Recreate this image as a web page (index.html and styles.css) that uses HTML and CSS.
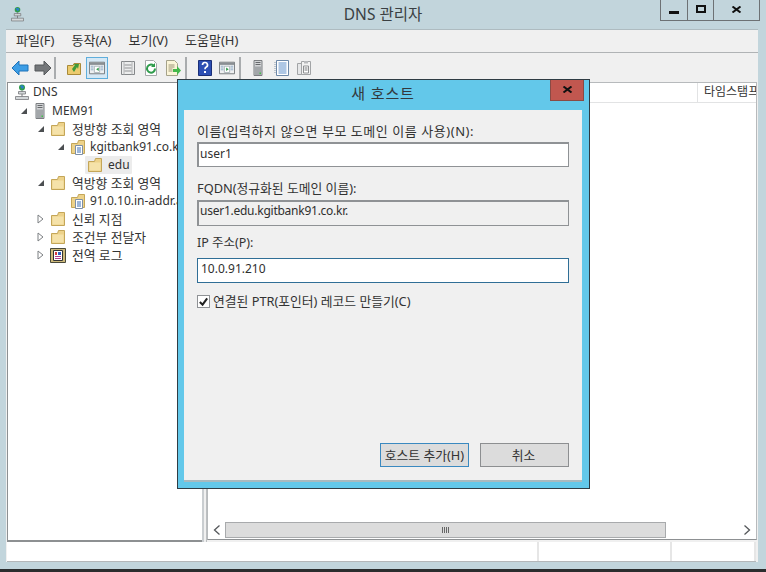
FILE: index.html
```html
<!DOCTYPE html>
<html lang="ko">
<head>
<meta charset="utf-8">
<title>DNS 관리자</title>
<link rel="stylesheet" href="styles.css">
</head>
<body>
<svg class="defs" width="0" height="0">
  <defs>
    <symbol id="dns" viewBox="0 0 14 16">
      <circle cx="7" cy="3.500" r="3" fill="#2f9c4c"/>
      <path d="M5 1.500h3l1 2-2 1.500z" fill="#2a7fd0"/>
      <path d="M6.500 6.500h1v3h-1z" fill="#666"/>
      <path d="M3.500 7.500h7v2.500h-7z" fill="#d4d8da" stroke="#77797c" stroke-width=".8"/>
      <path d="M.5 12.500h13v3H.5z" fill="#d4d8da" stroke="#77797c" stroke-width=".8"/>
      <path d="M7 10v2.500" stroke="#77797c"/>
    </symbol>
    <symbol id="server" viewBox="0 0 10 16">
      <path d="M1 .5h8v15H1z" fill="#d2d4d6" stroke="#7b7e81"/>
      <path d="M2.500 2.500h5M2.500 4.500h5" stroke="#66696c"/>
      <path d="M1.500 6.500h7v8.500h-7z" fill="#a3a7aa"/>
      <path d="M6.500 12.500h1.500v1.500H6.500z" fill="#42c14a"/>
    </symbol>
    <symbol id="folder" viewBox="0 0 16 16">
      <path d="M1.500 4.500V14.500h13V1.500H8.500L7.500 4.500z" fill="#edd28a" stroke="#c4a658"/>
      <path d="M2.500 5.500h11v8h-11z" fill="#f5e2a9"/>
    </symbol>
    <symbol id="zone" viewBox="0 0 16 16">
      <path d="M1.500 4.500V14.500h13V1.500H8.500L7.500 4.500z" fill="#edd28a" stroke="#c4a658"/>
      <path d="M5.500 6.500h7v9h-7z" fill="#fff" stroke="#7d8fa6"/>
      <path d="M7 9h4M7 11h4M7 13h4" stroke="#3b6fb5"/>
    </symbol>
    <symbol id="log" viewBox="0 0 16 16">
      <path d="M.5 1.500h15v14H.5z" fill="#cdb97a" stroke="#4a4a3a"/>
      <path d="M3.500 3.500h9v10h-9z" fill="#fff" stroke="#333"/>
      <path d="M5 5h2v3H5z" fill="#d93a3a"/>
      <path d="M8 5h3v3H8z" fill="#2f62c4"/>
      <path d="M5 9h6v1H5zM5 11h6v1H5z" fill="#b03a8c"/>
    </symbol>
    <symbol id="open" viewBox="0 0 8 10">
      <path d="M1 1l5 4-5 4z" fill="#fff" stroke="#7d8083"/>
    </symbol>
    <symbol id="expanded" viewBox="0 0 8 8">
      <path d="M7 1v6H1z" fill="#4c4f52"/>
    </symbol>
    <symbol id="close-x" viewBox="0 0 11 7">
      <path d="M1.500 .5l8 6M9.500 .5l-8 6" fill="none" stroke="#111" stroke-width="2"/>
    </symbol>
  </defs>
</svg>

<div class="app">
  <header class="titlebar">
    <svg class="title-icon"><use href="#dns"/></svg>
    <span class="title-text">DNS 관리자</span>
    <div class="window-buttons">
      <span class="wbtn wbtn-min"><i class="glyph-min"></i></span>
      <span class="wbtn wbtn-max"><i class="glyph-max"></i></span>
      <span class="wbtn wbtn-close"><svg class="close-glyph"><use href="#close-x"/></svg></span>
    </div>
  </header>

  <div class="client">
    <nav class="menubar">
      <span class="menu-item">파일(F)</span>
      <span class="menu-item">동작(A)</span>
      <span class="menu-item">보기(V)</span>
      <span class="menu-item">도움말(H)</span>
    </nav>

    <div class="toolbar">
      <svg class="tool tool-arrow" viewBox="0 0 18 16"><path d="M1 8l7-7v4h9v6H8v4z" fill="#3d9ee6" stroke="#1f72b8"/></svg>
      <svg class="tool tool-arrow" viewBox="0 0 18 16"><path d="M17 8l-7-7v4H1v6h9v4z" fill="#74777a" stroke="#55585b"/></svg>
      <span class="tool-sep"></span>
      <svg class="tool tool-before-active" viewBox="0 0 16 16"><path d="M1.500 5.500v9h13v-11H8l-1 2z" fill="#eccb6e" stroke="#a98a38"/><path d="M6 9l3-4-2-1h6l-1 5-1-2-3 5z" fill="#3f9a3a"/></svg>
      <span class="tool-active">
        <svg class="tool" viewBox="0 0 18 16"><path d="M.5 1.500h17v13H.5z" fill="#eef0f1" stroke="#6c7174"/><path d="M1 2h16v2.500H1z" fill="#8a8f93"/><path d="M6 6h6v7H6z" fill="#fff" stroke="#a5b0b5"/><path d="M11 7.500v4L8 9.500z" fill="#2f9c4c"/><path d="M2 6h3M2 8h3M2 10h3M13 6h3M13 8h3M13 10h3" stroke="#8aa7c4"/></svg>
      </span>
      <svg class="tool tool-gap" viewBox="0 0 16 16"><path d="M1.500 1.500h13v13h-13z" fill="#eceded" stroke="#85888a"/><path d="M4 1.500v13M12 1.500v13" stroke="#b2b4b6"/><path d="M4.500 5h7M4.500 8h7M4.500 11h7" stroke="#919395"/></svg>
      <svg class="tool" viewBox="0 0 16 16"><path d="M2.500 .5h8l3 3v12h-11z" fill="#fff" stroke="#a5a8aa"/><path d="M12 8.500a4 4 0 1 1-1.500-3" fill="none" stroke="#2f9c4c" stroke-width="2"/><path d="M12 3v4H8z" fill="#2f9c4c"/></svg>
      <svg class="tool tool-end" viewBox="0 0 16 16"><path d="M1.500 .5h8l3 3v12h-11z" fill="#fbf5d8" stroke="#a5a28a"/><path d="M3.500 5h6M3.500 7h6M3.500 9h4M3.500 11h4" stroke="#9b9476"/><path d="M8 9h4V6l4 4.500-4 4.500v-3H8z" fill="#45b84a"/></svg>
      <span class="tool-sep"></span>
      <svg class="tool" viewBox="0 0 16 16"><path d="M1.500 .5h13v15h-13z" fill="#2d4fb3" stroke="#1b2f78"/><path d="M5.500 5a2.500 2.500 0 1 1 3.500 2.300c-.8.400-1 .8-1 1.900" fill="none" stroke="#fff" stroke-width="1.700"/><path d="M7 11h2v2H7z" fill="#fff"/></svg>
      <svg class="tool tool-end" viewBox="0 0 18 16"><path d="M.5 1.500h17v13H.5z" fill="#eef0f1" stroke="#6c7174"/><path d="M1 2h16v2.500H1z" fill="#8a8f93"/><path d="M6 6h6v7H6z" fill="#fff" stroke="#a5b0b5"/><path d="M8 7.500v4l3-2z" fill="#2f9c4c"/><path d="M2 6h3M2 8h3M2 10h3M13 6h3M13 8h3M13 10h3" stroke="#8aa7c4"/></svg>
      <span class="tool-sep"></span>
      <svg class="tool tool-server"><use href="#server"/></svg>
      <svg class="tool" viewBox="0 0 16 16"><path d="M2.500 .5h12v15h-12z" fill="#fff" stroke="#6d88a8"/><path d="M4.500 3h8M4.500 5h8M4.500 7h8M4.500 9h8M4.500 11h8M4.500 13h8" stroke="#5f8fc9"/><path d="M1 2v12" stroke="#8a9aab" stroke-dasharray="1 1"/></svg>
      <svg class="tool" viewBox="0 0 16 16"><path d="M1.500 3.500h8v11h-8z" fill="#e6e7e8" stroke="#a2a4a6"/><path d="M5.500 1.500h9v13h-9z" fill="#f3f3f3" stroke="#a2a4a6"/><path d="M8 1h4v2.500H8z" fill="#b8babc"/><path d="M7.500 6h5v7h-5z" fill="#fff" stroke="#8e9092"/><path d="M8.500 8h3M8.500 10h3" stroke="#77797b"/></svg>
    </div>

    <div class="panes">
      <aside class="tree">
        <div class="node"><svg class="ico"><use href="#dns"/></svg><span>DNS</span></div>
        <div class="node lvl1"><svg class="tw"><use href="#expanded"/></svg><svg class="ico"><use href="#server"/></svg><span>MEM91</span></div>
        <div class="node lvl2"><svg class="tw"><use href="#expanded"/></svg><svg class="ico"><use href="#folder"/></svg><span>정방향 조회 영역</span></div>
        <div class="node lvl3"><svg class="tw"><use href="#expanded"/></svg><svg class="ico"><use href="#zone"/></svg><span>kgitbank91.co.kr</span></div>
        <div class="node lvl4"><span class="selected"><svg class="ico"><use href="#folder"/></svg><span>edu</span></span></div>
        <div class="node lvl2"><svg class="tw"><use href="#expanded"/></svg><svg class="ico"><use href="#folder"/></svg><span>역방향 조회 영역</span></div>
        <div class="node lvl3"><span class="tw"></span><svg class="ico"><use href="#zone"/></svg><span>91.0.10.in-addr.arpa</span></div>
        <div class="node lvl2"><svg class="tw tw-open"><use href="#open"/></svg><svg class="ico"><use href="#folder"/></svg><span>신뢰 지점</span></div>
        <div class="node lvl2"><svg class="tw tw-open"><use href="#open"/></svg><svg class="ico"><use href="#folder"/></svg><span>조건부 전달자</span></div>
        <div class="node lvl2"><svg class="tw tw-open"><use href="#open"/></svg><svg class="ico"><use href="#log"/></svg><span>전역 로그</span></div>
      </aside>
      <div class="splitter"></div>
      <section class="detail">
        <div class="list-head"><span class="col-spacer"></span><span class="col-stamp">타임스탬프</span></div>
        <div class="list-body"></div>
        <div class="hscroll">
          <span class="sb-arrow">
            <svg class="sb-glyph" viewBox="0 0 8 12"><path d="M6.500 1.500L1.500 6l5 4.500" fill="none" stroke="#55585b" stroke-width="1.300"/></svg>
          </span>
          <span class="sb-thumb"><i class="grip"></i></span>
          <span class="sb-track"></span>
          <span class="sb-arrow">
            <svg class="sb-glyph" viewBox="0 0 8 12"><path d="M1.500 1.500L6.500 6l-5 4.500" fill="none" stroke="#55585b" stroke-width="1.300"/></svg>
          </span>
        </div>
      </section>
    </div>

    <footer class="statusbar">
      <span class="st st-main"></span>
      <span class="st st-mid"></span>
      <span class="st st-end"></span>
    </footer>
  </div>
  <div class="frame-bottom"></div>
  <div class="taskbar-edge"></div>

  <div class="dialog">
    <div class="dialog-title">
      <span class="dialog-caption">새 호스트</span>
      <span class="dialog-close"><svg class="close-glyph"><use href="#close-x"/></svg></span>
    </div>
    <form class="dialog-body">
      <label class="field-label label-name">이름(입력하지 않으면 부모 도메인 이름 사용)(N):</label>
      <div class="input">user1</div>
      <label class="field-label label-fqdn">FQDN(정규화된 도메인 이름):</label>
      <div class="input input-readonly">user1.edu.kgitbank91.co.kr.</div>
      <label class="field-label label-ip">IP 주소(P):</label>
      <div class="input input-focus">10.0.91.210</div>
      <div class="check-row">
        <span class="checkbox"><svg class="check-mark" viewBox="0 0 12 12"><path d="M2 6.500l3 3 5-7" fill="none" stroke="#222" stroke-width="2.200"/></svg></span>
        <span>연결된 PTR(포인터) 레코드 만들기(C)</span>
      </div>
      <div class="dialog-actions">
        <span class="btn btn-default">호스트 추가(H)</span>
        <span class="btn btn-cancel">취소</span>
      </div>
    </form>
  </div>
</div>
</body>
</html>
```

FILE: styles.css
```css
* { box-sizing: border-box; }
html, body { margin: 0; padding: 0; }
body {
  width: 766px;
  height: 572px;
  overflow: hidden;
  font-family: "Noto Sans", "Noto Sans CJK KR", sans-serif;
  font-size: 12px;
  color: #333;
  background: #c2d5dc;
}
.defs { position: absolute; }
.app {
  position: relative;
  width: 766px;
  height: 572px;
  display: flex;
  flex-direction: column;
}

/* Title bar */
.titlebar {
  height: 29px;
  flex: none;
  display: grid;
  grid-template-columns: 1fr auto 1fr;
  align-items: start;
}
.title-icon { width: 13px; height: 16px; margin: 6px 0 0 11px; }
.title-text {
  font-size: 15.500px;
  line-height: 20px;
  margin-top: 4px;
  color: #3a3f42;
}
.window-buttons {
  justify-self: end;
  display: flex;
  margin-right: 6px;
  height: 21px;
  border: 1px solid #6d7174;
  border-top: 0;
}
.wbtn {
  display: flex;
  align-items: center;
  justify-content: center;
  height: 20px;
  background: #c2d5dc;
  color: #111;
}
.wbtn-min { width: 27px; border-right: 1px solid #6d7174; }
.wbtn-max { width: 26px; border-right: 1px solid #6d7174; }
.wbtn-close { width: 45px; }
.close-glyph { width: 11px; height: 7px; margin-bottom: 2px; }
.glyph-min { width: 10px; height: 3px; background: #111; margin-top: 5px; }
.glyph-max { width: 10px; height: 8px; border: 2px solid #111; margin-bottom: 2px; }

/* Client */
.client {
  margin: 0 8px 0 6px;
  height: 533px;
  flex: none;
  display: flex;
  flex-direction: column;
  background: #f0f0f0;
  border-top: 1px solid #aebbc0;
}
.menubar {
  height: 23px;
  flex: none;
  display: flex;
  align-items: center;
  gap: 17px;
  padding: 0 0 4px 10px;
  border-bottom: 1px solid #b0b3b5;
  font-size: 13px;
}
.toolbar {
  height: 29px;
  flex: none;
  display: flex;
  align-items: center;
  padding-left: 5px;
}
.tool { width: 16px; height: 16px; margin-right: 6px; flex: none; }
.tool-arrow { width: 18px; margin-right: 5px; }
.tool-arrow + .tool-arrow { margin-right: 2px; }
.tool-sep {
  width: 2px;
  height: 22px;
  background: #a9acae;
  margin-right: 10px;
  flex: none;
}
.tool-before-active { margin-right: 4px; }
.tool-active {
  display: flex;
  align-items: center;
  justify-content: center;
  width: 22px;
  height: 22px;
  background: #d5e8f5;
  border: 1px solid #5faedc;
  margin-right: 12px;
}
.tool-active .tool { margin: 0; }
.tool-gap { margin-right: 7px; }
.tool-end { margin-right: 4px; }
.tool-end + .tool-sep + .tool-server { margin-left: 2px; }
.tool-server { width: 10px; margin-right: 11px; }

/* Panes */
.panes {
  flex: 1;
  min-height: 0;
  display: flex;
}
.tree {
  width: 195px;
  flex: none;
  background: #fff;
  border: 1px solid #8d9092;
  border-right: 0;
  border-bottom-width: 2px;
  margin-left: 1px;
  overflow: hidden;
}
.node {
  height: 18px;
  display: flex;
  align-items: center;
  white-space: nowrap;
  padding-left: 7px;
}
.node > span:last-child:not(.selected), .selected > span { margin-bottom: 2px; }
.ico { width: 14px; height: 16px; margin-right: 4px; flex: none; }
.tw { width: 8px; height: 8px; margin-right: 5px; flex: none; }
.tw-open { height: 10px; }
.lvl1 { padding-left: 12px; margin-top: 1px; }
.lvl1 .ico { width: 10px; margin: 0 7px 0 2px; }
.lvl2 { padding-left: 29px; font-size: 12.800px; }
.lvl2 > span:last-child { margin-bottom: 4px; }
.lvl2 .ico { width: 16px; margin-right: 6px; }
.lvl3 { padding-left: 49px; }
.lvl3 .ico { width: 16px; margin-right: 4px; }
.lvl4 { padding-left: 77px; }
.lvl4 .ico { width: 16px; margin-right: 5px; }
.selected {
  display: flex;
  align-items: center;
  height: 18px;
  width: 47px;
  padding-left: 2px;
  background: #ececec;
  border-radius: 1px;
}
.splitter {
  width: 5px;
  flex: none;
  background: #f0f0f0;
  border-left: 2px solid #c9cdd0;
  border-right: 1px solid #bcbfc1;
}
.detail {
  flex: 1;
  min-width: 0;
  display: flex;
  flex-direction: column;
  background: #fff;
  border: 1px solid #b7babc;
  border-bottom: 1px solid #8d9092;
  margin: 0 1px 2px 0;
}
.list-head {
  height: 20px;
  flex: none;
  display: flex;
  border-bottom: 1px solid #e2e3e4;
  overflow: hidden;
}
.col-spacer { width: 490px; flex: none; border-right: 1px solid #e2e3e4; }
.col-stamp { padding-left: 6px; white-space: nowrap; line-height: 18px; font-size: 12px; }
.list-body { flex: 1; }
.hscroll {
  height: 18px;
  flex: none;
  display: flex;
  align-items: stretch;
  background: #fff;
  padding: 1px;
}
.sb-arrow {
  width: 16px;
  flex: none;
  display: flex;
  align-items: center;
  justify-content: center;
  background: #fff;
}
.sb-glyph { width: 8px; height: 12px; }
.sb-thumb {
  flex: none;
  width: 441px;
  display: flex;
  align-items: center;
  justify-content: center;
  background: #dcdcdc;
  border: 1px solid #a8aaac;
}
.grip {
  width: 8px;
  height: 6px;
  background: repeating-linear-gradient(90deg, #666 0 1px, transparent 1px 2px);
}
.sb-track { flex: 1; background: #fff; }

/* Status */
.statusbar {
  height: 20px;
  flex: none;
  display: flex;
  background: #fff;
  margin: 0 2px 0 1px;
  border-bottom: 1px solid #b4b7b9;
}
.st { border-right: 2px solid #e6e6e6; }
.st-main { width: 532px; }
.st-mid { width: 133px; }
.st-end { flex: 1; }
.frame-bottom { flex: 1; }
.taskbar-edge { height: 3px; flex: none; background: #2b2d2e; }

/* Dialog */
.dialog {
  position: absolute;
  left: 177px;
  top: 79px;
  width: 413px;
  height: 410px;
  display: flex;
  flex-direction: column;
  background: #63c8ea;
  border: 1px solid #2f3c44;
  padding: 0 7px 6px 6px;
}
.dialog-title {
  height: 30px;
  flex: none;
  position: relative;
  display: flex;
  align-items: center;
  justify-content: center;
  padding-bottom: 5px;
}
.dialog-caption { font-size: 15px; letter-spacing: .9px; color: #33393d; }
.dialog-close {
  position: absolute;
  top: 0;
  right: -2px;
  width: 34px;
  height: 21px;
  display: flex;
  align-items: center;
  justify-content: center;
  background: #c1574f;
  border: 1px solid #8a4a44;
  border-top: 0;
}
.dialog-body {
  flex: 1;
  min-height: 0;
  display: flex;
  flex-direction: column;
  background: #f0f0f0;
  border-bottom: 2px solid #a9b9bf;
  padding: 12px 13px 13px;
}
.field-label { line-height: 18px; height: 18px; }
.label-name { font-size: 13px; letter-spacing: .55px; }
.label-fqdn { margin-top: 12px; font-size: 12.800px; }
.label-ip { margin-top: 8px; font-size: 12.500px; }
.input {
  height: 25px;
  margin-top: 2px;
  border: 1px solid #8f9295;
  border-left-width: 2px;
  border-top-width: 2px;
  background: #fff;
  padding-left: 1px;
  line-height: 19px;
  color: #2f2f2f;
}
.input-readonly { height: 26px; margin-top: 3px; background: #f0f0f0; letter-spacing: -.25px; line-height: 18px; }
.input-focus { border-color: #2f6e96; border-left-width: 1px; border-top-width: 1px; padding-left: 3px; margin-top: 6px; }
.check-row {
  display: flex;
  align-items: center;
  gap: 3px;
  margin-top: 9px;
  height: 16px;
  font-size: 12.800px;
}
.checkbox {
  width: 13px;
  height: 13px;
  background: #fff;
  border: 1px solid #8f9295;
  display: flex;
  margin-top: 2px;
}
.check-mark { width: 11px; height: 11px; }
.dialog-actions {
  margin-top: auto;
  display: flex;
  justify-content: flex-end;
  gap: 11px;
}
.btn {
  width: 89px;
  height: 24px;
  display: flex;
  align-items: center;
  justify-content: center;
  background: #dcdcdc;
  border: 1px solid #8d8f91;
  font-size: 12.800px;
  white-space: nowrap;
  padding-bottom: 2px;
}
.btn-default { border-color: #3a89c0; }
.btn-cancel { padding-right: 2px; }
```
